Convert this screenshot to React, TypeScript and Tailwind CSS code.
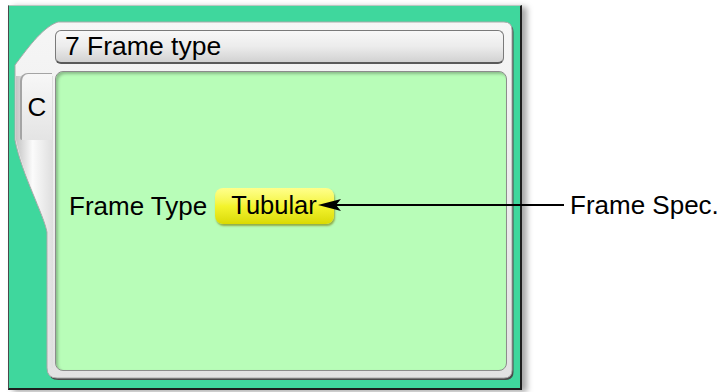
import React from "react";

const font = { fontFamily: '"Liberation Sans", Arial, sans-serif' };

export default function App() {
  return (
    <div
      className="relative flex w-[723px] h-[392px] bg-white overflow-hidden"
      style={font}
    >
      {/* Device screen */}
      <div className="relative ml-[8px] mt-[5px] w-[514px] h-[385px] shrink-0 bg-[#3fd79d] border-t border-l border-r-2 border-b-2 border-t-[#b8c8c0] border-l-[#4a4a4a] border-r-[#1e1e1e] border-b-[#1e1e1e] shadow-[5px_2px_6px_rgba(0,0,0,0.35)]">
        {/* Bezel drawing */}
        <svg
          className="absolute left-0 top-0"
          width="511"
          height="382"
          viewBox="0 0 511 382"
        >
          <defs>
            <linearGradient id="bz" x1="0" y1="0" x2="0" y2="1">
              <stop offset="0" stopColor="#f6f6f6" />
              <stop offset="1" stopColor="#e2e2e2" />
            </linearGradient>
            <linearGradient id="bzl" x1="0" y1="0" x2="1" y2="0">
              <stop offset="0" stopColor="#c4c4c4" />
              <stop offset="0.45" stopColor="#fbfbfb" />
              <stop offset="1" stopColor="#dedede" />
            </linearGradient>
          </defs>
          <path
            d="M7.5 136 L7.5 61 C17.5 48 34.5 23 50.5 18 L496.5 18 Q504.5 18 504.5 26 L504.5 366 Q504.5 374 496.5 374 L49.5 374 Q39.5 374 39.5 364 L39.5 228 C36.5 211 14.5 171 7.5 136 Z"
            fill="#4a4a4a"
          />
          <path
            d="M6 134 L6 59 C16 46 33 21 49 16 L495 16 Q503 16 503 24 L503 364 Q503 372 495 372 L48 372 Q38 372 38 362 L38 226 C35 209 13 169 6 134 Z"
            fill="url(#bz)"
            stroke="#a9a9a9"
            strokeWidth="1"
          />
          <path
            d="M7 134 L7 70 L44 70 L44 362 L39 362 L39 226 C36 209 14 169 7 134 Z"
            fill="url(#bzl)"
          />
        </svg>

        {/* Content */}
        <div className="relative flex flex-row gap-[3px] pl-[11px] pt-[24px]">
          {/* Tab */}
          <div className="mt-[43px] flex h-[67px] w-[32px] items-center justify-center rounded-tl-[8px] rounded-bl-[2px] border-l-2 border-t border-[#a4a4a4] bg-gradient-to-b from-[#f7f7f7] to-[#e4e4e4] text-[26px] leading-none text-black">
            C
          </div>
          {/* Main column */}
          <div className="flex flex-col">
            <div className="flex h-[34px] w-[449px] items-center rounded-[6px] border border-[#7a7a7a] border-b-2 border-b-[#5a5a5a] bg-gradient-to-b from-[#f8f8f8] via-[#ececec] to-[#d2d2d2] pl-[9px] text-[26.5px] leading-none text-black">
              7 Frame type
            </div>
            <div className="mt-[7px] flex h-[300px] w-[452px] flex-col rounded-[8px] border border-[#8c8c8c] bg-[#b8fdb8] shadow-[inset_2px_2px_3px_rgba(0,0,0,0.25)]">
              <div className="mt-[116px] flex flex-row items-center pl-[13px]">
                <span className="text-[26px] leading-none text-black">
                  Frame Type
                </span>
                <div className="ml-[8px] flex h-[36px] items-center rounded-[8px] bg-gradient-to-b from-[#ffff8a] via-[#f4f42c] to-[#dada00] pl-[16px] pr-[17px] text-[25.5px] leading-none text-black shadow-[1px_2px_2px_rgba(120,120,0,0.6)]">
                  Tubular
                </div>
              </div>
            </div>
          </div>
        </div>
      </div>

      {/* Label */}
      <div className="ml-[48px] mt-[190px] self-start text-[26px] leading-[30px] text-black whitespace-nowrap">
        Frame Spec.
      </div>

      {/* Arrow annotation */}
      <svg
        className="absolute left-[317px] top-[198px]"
        width="250"
        height="14"
        viewBox="0 0 250 14"
      >
        <line x1="18" y1="7" x2="247" y2="7" stroke="#000" strokeWidth="2" />
        <path d="M1 7 L24 1 L19 7 L24 13 Z" fill="#000" />
      </svg>
    </div>
  );
}
